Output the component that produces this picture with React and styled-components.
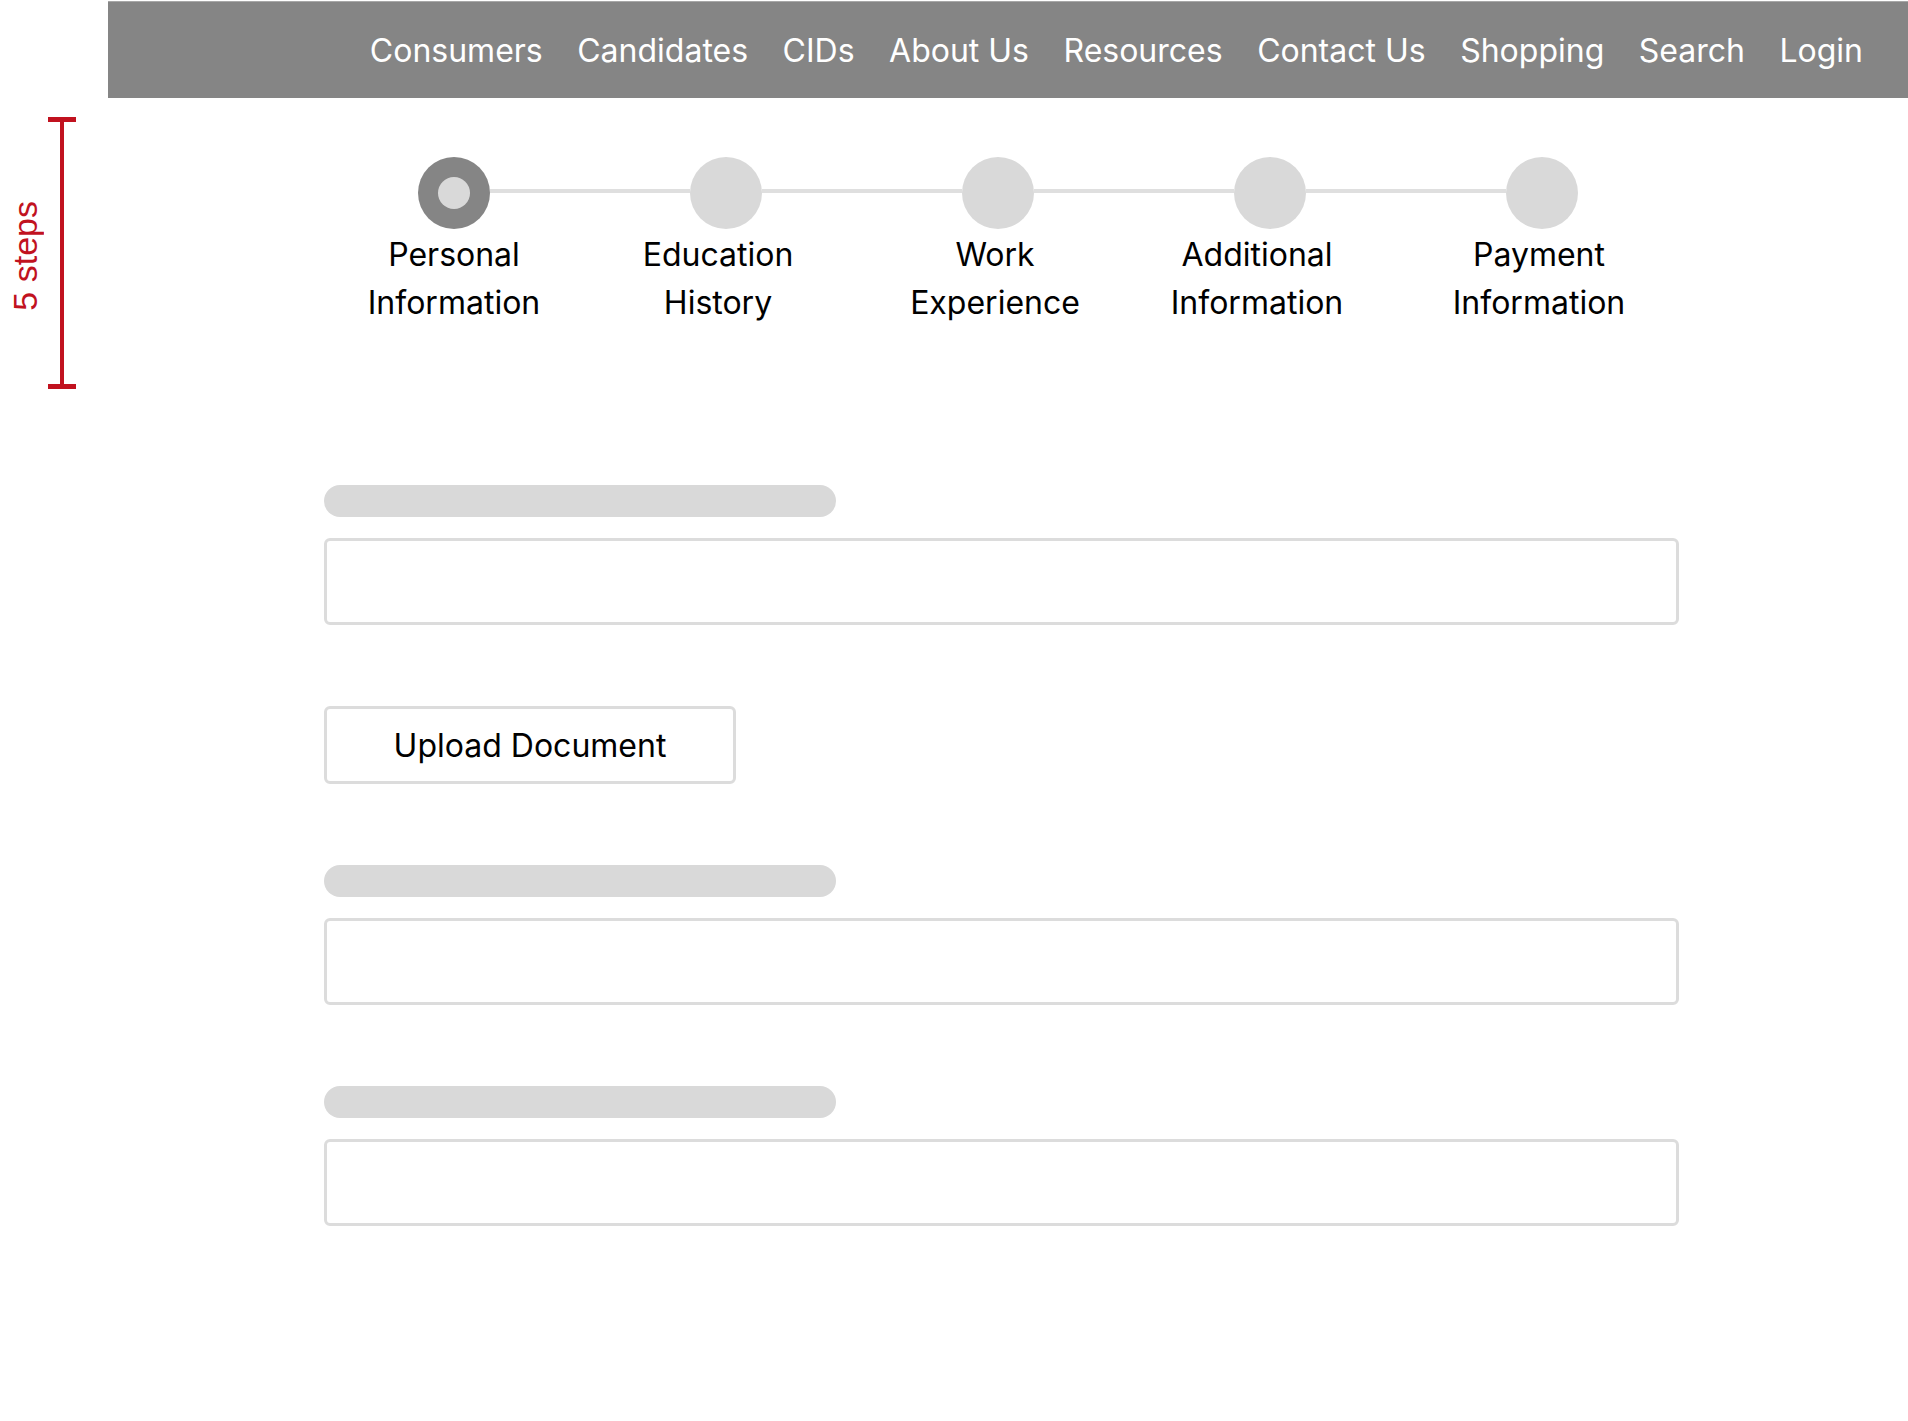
import React from "react"
import styled, { createGlobalStyle } from "styled-components"

const GlobalStyle = createGlobalStyle`
  html, body {
    margin: 0;
    padding: 0;
    background: #fff;
  }
  body {
    font-family: Inter, "Noto Sans", sans-serif;
    color: #000;
  }
`

const Page = styled.div`
  display: flex;
  min-height: 1421px;
`

const Aside = styled.aside`
  width: 108px;
  flex-shrink: 0;
  padding-top: 117px;
  box-sizing: border-box;
`

const Measure = styled.div`
  display: flex;
  align-items: center;
  height: 272px;
`

const MeasureLabel = styled.span`
  font-family: "Liberation Sans", Arial, sans-serif;
  font-size: 34px;
  color: #c1121f;
  writing-mode: vertical-rl;
  transform: rotate(180deg);
  width: 38px;
  margin-left: 6px;
  margin-top: 6px;
  white-space: nowrap;
`

const Bracket = styled.svg`
  width: 28px;
  height: 272px;
  margin-left: 4px;
  display: block;
`

const Main = styled.main`
  flex: 1;
  min-width: 0;
`

const Nav = styled.nav`
  margin-top: 1px;
  height: 97px;
  background: #858585;
  border-top: 1px solid #a7a7a7;
  box-sizing: border-box;
  display: flex;
  align-items: center;
  justify-content: flex-end;
  gap: 34.5px;
  padding: 0 45px 0 0;
`

const NavLink = styled.a`
  color: #fff;
  font-size: 32px;
  text-decoration: none;
  white-space: nowrap;
`

const Stepper = styled.section`
  margin-top: 59px;
  padding-left: 210px;
`

const Track = styled.div`
  display: flex;
  align-items: center;
  padding-left: 100px;
`

const Dot = styled.div`
  width: 72px;
  height: 72px;
  border-radius: 50%;
  flex-shrink: 0;
  background: ${p => (p.$active ? "#858585" : "#d9d9d9")};
  display: flex;
  align-items: center;
  justify-content: center;
`

const DotCore = styled.div`
  width: 32px;
  height: 32px;
  border-radius: 50%;
  background: #d9d9d9;
`

const Connector = styled.div`
  width: 200px;
  height: 4px;
  margin-top: -4px;
  background: #dfdfdf;
`

const Labels = styled.div`
  display: flex;
  padding-top: 2px;
`

const StepLabel = styled.div`
  width: 272px;
  text-align: center;
  font-size: 32px;
  line-height: 48px;
  color: #000;
  transform: translateX(${p => p.$shift || 0}px);
`

const Form = styled.form`
  margin-top: 158px;
  margin-left: 216px;
  width: 1355px;
  display: flex;
  flex-direction: column;
  gap: 81px;
`

const Field = styled.div`
  display: flex;
  flex-direction: column;
  gap: 21px;
`

const LabelBar = styled.div`
  width: 512px;
  height: 32px;
  border-radius: 16px;
  background: #d9d9d9;
`

const Input = styled.div`
  height: 87px;
  border: 3px solid #dcdcdc;
  border-radius: 6px;
  box-sizing: border-box;
  background: #fff;
`

const UploadButton = styled.button`
  width: 412px;
  height: 78px;
  border: 3px solid #dcdcdc;
  border-radius: 6px;
  background: #fff;
  box-sizing: border-box;
  font-family: Inter, "Noto Sans", sans-serif;
  font-size: 32px;
  color: #000;
  cursor: pointer;
  padding: 0;
`

const navItems = [
  "Consumers",
  "Candidates",
  "CIDs",
  "About Us",
  "Resources",
  "Contact Us",
  "Shopping",
  "Search",
  "Login",
]

// label text sits a touch left of its dot in the mockup
const steps = [
  { top: "Personal", bottom: "Information", shift: 0 },
  { top: "Education", bottom: "History", shift: -8 },
  { top: "Work", bottom: "Experience", shift: -3 },
  { top: "Additional", bottom: "Information", shift: -13 },
  { top: "Payment", bottom: "Information", shift: -3 },
]

export default () => {
  return (
    <>
      <GlobalStyle />
      <Page>
        <Aside>
          <Measure>
            <MeasureLabel>5 steps</MeasureLabel>
            <Bracket viewBox="0 0 28 272">
              <rect x="0" y="0" width="28" height="5" fill="#c1121f" />
              <rect x="12" y="0" width="4" height="272" fill="#c1121f" />
              <rect x="0" y="267" width="28" height="5" fill="#c1121f" />
            </Bracket>
          </Measure>
        </Aside>
        <Main>
          <Nav>
            {navItems.map(item => (
              <NavLink key={item} href="#">
                {item}
              </NavLink>
            ))}
          </Nav>

          <Stepper>
            <Track>
              {steps.map((s, i) => (
                <React.Fragment key={s.top}>
                  {i > 0 && <Connector />}
                  <Dot $active={i === 0}>{i === 0 && <DotCore />}</Dot>
                </React.Fragment>
              ))}
            </Track>
            <Labels>
              {steps.map(s => (
                <StepLabel key={s.top} $shift={s.shift}>
                  {s.top}
                  <br />
                  {s.bottom}
                </StepLabel>
              ))}
            </Labels>
          </Stepper>

          <Form onSubmit={e => e.preventDefault()}>
            <Field>
              <LabelBar />
              <Input />
            </Field>
            <div>
              <UploadButton type="button">Upload Document</UploadButton>
            </div>
            <Field>
              <LabelBar />
              <Input />
            </Field>
            <Field>
              <LabelBar />
              <Input />
            </Field>
          </Form>
        </Main>
      </Page>
    </>
  )
}
